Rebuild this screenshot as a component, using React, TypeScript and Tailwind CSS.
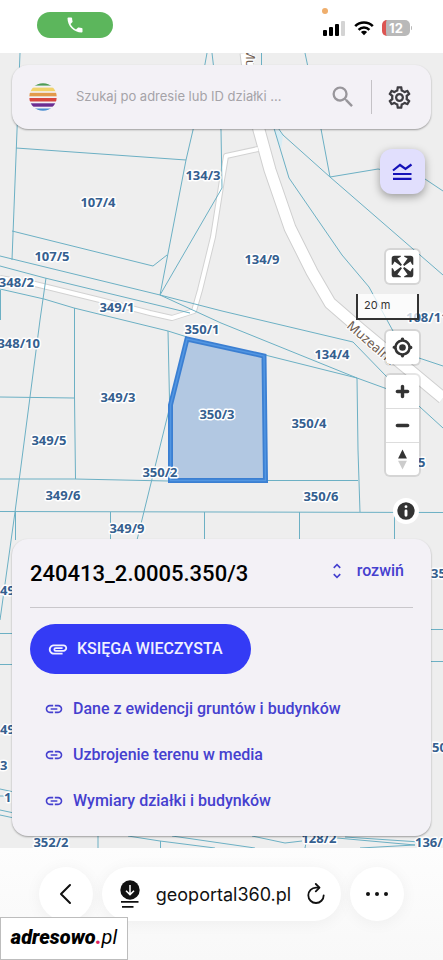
import { MdAttachment, MdLink, MdOutlineSettings, MdPhone, MdSearch, MdUnfoldMore } from 'react-icons/md';

interface ParcelLabel {
  text: string;
  x: number;
  y: number;
  anchor?: 'start' | 'middle' | 'end';
}

const parcelLabels: ParcelLabel[] = [
  { text: '107/4', x: 98, y: 207 },
  { text: '134/3', x: 203, y: 180 },
  { text: '107/5', x: 52, y: 261 },
  { text: '348/2', x: 34, y: 287, anchor: 'end' },
  { text: '349/1', x: 117, y: 312 },
  { text: '350/1', x: 202, y: 334 },
  { text: '134/9', x: 262, y: 264 },
  { text: '108/11', x: 406, y: 322, anchor: 'start' },
  { text: '348/10', x: 40, y: 348, anchor: 'end' },
  { text: '134/4', x: 332, y: 359 },
  { text: '349/3', x: 118, y: 402 },
  { text: '350/3', x: 217, y: 419 },
  { text: '350/4', x: 309, y: 428 },
  { text: '349/5', x: 49, y: 445 },
  { text: '350/2', x: 160, y: 477 },
  { text: '349/6', x: 63, y: 500 },
  { text: '350/6', x: 321, y: 501 },
  { text: '349/9', x: 127, y: 533 },
  { text: '5', x: 418, y: 467, anchor: 'start' },
  { text: '35', x: 431, y: 578, anchor: 'start' },
  { text: '49', x: 0, y: 595, anchor: 'start' },
  { text: '49', x: 0, y: 734, anchor: 'start' },
  { text: '50', x: 432, y: 752, anchor: 'start' },
  { text: '3', x: 0, y: 770, anchor: 'start' },
  { text: '1', x: 4, y: 802, anchor: 'start' },
  { text: '352/2', x: 51, y: 847 },
  { text: '128/2', x: 319, y: 843 },
  { text: '136/', x: 415, y: 847, anchor: 'start' },
];

const boundaries = [
  'M20 53L12 260',
  'M207 53L193 130L186 160L160 295',
  'M212 53L221 130L222 188L160 295',
  'M16 148L186 160',
  'M12 231L153 266L167 255',
  'M0 256L160 295L222 311L353 342L386 376L443 428',
  'M0 266L45 278L190 313',
  'M160 295L221 323L357 378L390 390',
  'M0 289L44 299L74 308L168 331L187 337',
  'M265 355L357 378L358 450L360 512',
  'M46 278L40 320L30 397L15 512L0 620',
  'M74.5 308V397L75.5 479',
  'M0 397L74 398',
  'M168 331L169.5 400',
  'M0 479H75L168 481M266 480.5H358',
  'M0 511.5L443 512.5',
  'M169 410L137 540',
  'M15.5 512V540M110.5 512V540M204.5 512V540M299.5 512V540M394.5 512V540',
  'M0.5 290V320',
  'M0 633.5H14M0 664.5H14M430 629.5H443M430 661.5H443',
  'M0 789L14 792M0 796H5M0 810L14 813M0 815L14 818',
  'M98 835V848M160.5 841V848M128 836L160 841L215 848M172 836L255 848',
  'M252 836L285 843L302 841M306 843L305 848M337 838L415 845M345 837L420 842M415 845L360 848',
  'M261.5 53V66',
  'M273 125L289 178L342 255L369 287L393 331L410 355L443 366',
  'M276 125L283 135L330 177L443 275',
  'M305 53L321 129L330 177L378 169L425 179L443 191',
];

const serviceRoad = 'M258 149L226 156L222 180L213 237L200 290L194 311L172 318L150 313L100 300L35 284L0 278';
const mainRoad = 'M246 53L252 100L259 130L270 170L290 228L312 272L330 303L360 329L443 398';
const selectedParcel = 'M187 339L264 356L265.5 480.5L170.5 480.5L170.5 405Z';

const links = ['Dane z ewidencji gruntów i budynków', 'Uzbrojenie terenu w media', 'Wymiary działki i budynków'];

function StatusBar() {
  return (
    <header className="relative h-[53px] flex items-start justify-between bg-white pt-3 pl-[37px] pr-[31px]">
      <div className="w-[76px] h-[26px] rounded-full bg-[#5cb65c] flex items-center justify-center">
        <MdPhone className="size-5 text-white" />
      </div>
      <span className="absolute top-2 left-[73%] size-1.5 -translate-x-px rounded-full bg-[#efae6c]" />
      <div className="flex items-center gap-2 pt-2">
        <svg width="23" height="16" viewBox="0 0 23 16">
          <rect x="0" y="10" width="4" height="6" rx="1" />
          <rect x="6" y="7" width="4" height="9" rx="1" />
          <rect x="12" y="4" width="4" height="12" rx="1" />
          <rect x="18" y="1" width="4" height="15" rx="1" fill="#d4d4d4" />
        </svg>
        <svg width="20" height="16" viewBox="0 0 20 16" fill="none" stroke="#000" strokeWidth="2.6">
          <path d="M1.2 6.2a12.4 12.4 0 0 1 17.6 0" />
          <path d="M4.6 9.8a7.6 7.6 0 0 1 10.8 0" />
          <path d="M10 15.2L6.9 12a4.4 4.4 0 0 1 6.2 0Z" fill="#000" stroke="none" />
        </svg>
        <div className="flex items-center">
          <div className="h-4 w-7 rounded-[5px] border-l-4 border-[#dc5552] bg-[#b9b9b9] pr-1 text-center text-[13px] leading-4 font-bold text-white">
            12
          </div>
          <span className="ml-px h-1 w-px rounded-r bg-[#b9b9b9]" />
        </div>
      </div>
    </header>
  );
}

function ParcelMap() {
  return (
    <svg
      className="absolute inset-0 w-full h-full"
      viewBox="0 53 443 795"
      preserveAspectRatio="xMidYMid slice"
      aria-hidden="true"
    >
      {/* Roads */}
      <g fill="none" strokeLinejoin="round">
        <path d={serviceRoad} stroke="#d2d2d2" strokeWidth="6" />
        <path d={mainRoad} stroke="#cfcfcf" strokeWidth="13" />
        <path d={serviceRoad} stroke="#fff" strokeWidth="4" />
        <path d={mainRoad} stroke="#fff" strokeWidth="11" />
      </g>

      {/* Parcel boundaries */}
      <path d="M274 129L276 128L283 135L281 150Z" fill="#d8edf5" />
      <path d={boundaries.join('')} fill="none" stroke="#6cb0c4" strokeWidth="1" />

      {/* Selected parcel */}
      <path d={selectedParcel} fill="#b2c8e2" stroke="#3b7fd2" strokeWidth="5" />
      <path d={selectedParcel} fill="none" stroke="#5296e2" strokeWidth="1.5" />

      <g fill="#6d5b4f" stroke="#fff" strokeWidth="2" paintOrder="stroke" fontSize="13" className="font-['Noto_Sans',sans-serif]">
        <text transform="translate(346 327) rotate(41)">Muzealna</text>
        <text transform="translate(246 48) rotate(90)">Mu</text>
      </g>

      <g
        fill="#35608f"
        stroke="#fff"
        strokeWidth="3"
        strokeLinejoin="round"
        paintOrder="stroke"
        fontSize="13"
        fontWeight="700"
        className="font-['Noto_Sans',sans-serif]"
      >
        {parcelLabels.map((label) => (
          <text key={`${label.text}-${label.y}`} x={label.x} y={label.y} textAnchor={label.anchor ?? 'middle'}>
            {label.text}
          </text>
        ))}
      </g>
    </svg>
  );
}

function Logo() {
  return (
    <svg className="size-7 shrink-0" viewBox="0 0 28 28">
      <clipPath id="logo-disc">
        <circle cx="14" cy="14" r="13.7" />
      </clipPath>
      <g clipPath="url(#logo-disc)">
        <rect y="0" width="28" height="2.6" fill="#4f9b55" />
        <rect y="4.6" width="28" height="3.6" fill="#f1d36b" />
        <rect y="9.8" width="28" height="3.5" fill="#e29a4b" />
        <rect y="15" width="28" height="3.5" fill="#d8473f" />
        <rect y="20.3" width="28" height="3.4" fill="#6b2d91" />
        <rect y="25.5" width="28" height="2.5" fill="#4d8fd0" />
      </g>
    </svg>
  );
}

function SearchBar() {
  return (
    <div className="h-16 flex items-center rounded-2xl bg-[#f3f1f6] pl-[17px] pr-[18px] shadow-[0_1px_2px_rgba(0,0,0,0.35)]">
      <Logo />
      <input
        type="text"
        aria-label="Szukaj"
        placeholder="Szukaj po adresie lub ID działki ..."
        className="ml-[19px] min-w-0 flex-1 bg-transparent text-[13px] text-[#333] placeholder:text-[#a5a3a8] outline-none"
      />
      <button aria-label="Szukaj działki" className="text-[#98969b]">
        <MdSearch className="size-7" />
      </button>
      <span className="mx-3.5 h-[34px] w-px bg-[#c4c2c6]" />
      <button aria-label="Ustawienia" className="text-[#3e3d42]">
        <MdOutlineSettings className="size-[27px]" />
      </button>
    </div>
  );
}

function MapControls() {
  return (
    <>
      <button
        aria-label="Pomiar"
        className="mt-5 mr-1.5 size-[45px] self-end rounded-xl bg-[#e1dffd] shadow-[0_3px_8px_rgba(0,0,0,0.35)]"
      >
        <svg viewBox="0 0 45 45" fill="none" stroke="#1512b8" strokeWidth="2.2">
          <path d="M13 21.5L20 16L25.5 20L31.5 15.5M13 25H31.5M13 29.8H31.5" />
        </svg>
      </button>

      <div className="mt-14 mr-3 mb-3 flex flex-col items-end gap-[11px]">
        <button aria-label="Pełny ekran" className="size-[33px] rounded bg-white shadow-[0_0_0_2px_rgba(0,0,0,0.1)]">
          <svg viewBox="0 0 29 29" fill="#333">
            <path d="M24 16v5.5c0 1.75-.75 2.5-2.5 2.5H16v-1l3-1.5-4-5.5 1-1 5.5 4 1.5-3h1zM6 16l1.5 3 5.5-4 1 1-4 5.5 3 1.5v1H7.5C5.75 24 5 23.25 5 21.5V16h1zm7-11v1l-3 1.5 4 5.5-1 1-5.5-4L6 13H5V7.5C5 5.75 5.75 5 7.5 5H13zm11 2.5c0-1.75-.75-2.5-2.5-2.5H16v1l3 1.5-4 5.5 1 1 5.5-4 1.5 3h1V7.5z" />
          </svg>
        </button>

        <div className="h-[26px] w-[63px] border-2 border-t-0 border-[#333] bg-white/75 pl-1.5 text-[11px] leading-[22px] text-[#333]">
          20 m
        </div>

        <button aria-label="Moja lokalizacja" className="size-[33px] rounded bg-white shadow-[0_0_0_2px_rgba(0,0,0,0.1)]">
          <svg viewBox="0 0 20 20" fill="#333">
            <path d="M10 4C9 4 9 5 9 5v.1A5 5 0 0 0 5.1 9H5s-1 0-1 1 1 1 1 1h.1A5 5 0 0 0 9 14.9v.1s0 1 1 1 1-1 1-1v-.1a5 5 0 0 0 3.9-3.9h.1s1 0 1-1-1-1-1-1h-.1A5 5 0 0 0 11 5.1V5s0-1-1-1zm0 2.5a3.5 3.5 0 1 1 0 7 3.5 3.5 0 1 1 0-7z" />
            <circle cx="10" cy="10" r="2" />
          </svg>
        </button>

        <div className="flex flex-col divide-y divide-[#ddd] rounded bg-white shadow-[0_0_0_2px_rgba(0,0,0,0.1)]">
          <button aria-label="Przybliż" className="w-[33px]">
            <svg viewBox="0 0 29 29" fill="#333">
              <path d="M14.5 8.5c-.75 0-1.5.75-1.5 1.5v3h-3c-.75 0-1.5.75-1.5 1.5S9.25 16 10 16h3v3c0 .75.75 1.5 1.5 1.5S16 19.75 16 19v-3h3c.75 0 1.5-.75 1.5-1.5S19.75 13 19 13h-3v-3c0-.75-.75-1.5-1.5-1.5z" />
            </svg>
          </button>
          <button aria-label="Oddal" className="w-[33px]">
            <svg viewBox="0 0 29 29" fill="#333">
              <path d="M10 13c-.75 0-1.5.75-1.5 1.5S9.25 16 10 16h9c.75 0 1.5-.75 1.5-1.5S19.75 13 19 13h-9z" />
            </svg>
          </button>
          <button aria-label="Północ" className="w-[33px]">
            <svg className="h-8 w-full" viewBox="0 0 29 29">
              <path d="M10.5 14l4-8 4 8z" fill="#333" />
              <path d="M10.5 16l4 8 4-8z" fill="#ccc" />
            </svg>
          </button>
        </div>

        <button aria-label="Informacje o mapie" className="mt-3 size-[26px] rounded-full bg-white">
          <svg viewBox="1 1 18 18" fill="#333" fillRule="evenodd">
            <path d="M4 10a6 6 0 1 0 12 0 6 6 0 1 0-12 0m5-3a1 1 0 1 0 2 0 1 1 0 1 0-2 0m0 3a1 1 0 1 1 2 0v3a1 1 0 1 1-2 0" />
          </svg>
        </button>
      </div>
    </>
  );
}

function ParcelSheet() {
  return (
    <section className="mt-auto rounded-2xl bg-[#f3f1f6] px-[18px] pt-4 pb-3 font-['Roboto',sans-serif] shadow-[0_1px_2px_rgba(0,0,0,0.35)]">
      <div className="h-9 flex items-center justify-between">
        <h1 className="text-[22px] font-medium text-black">240413_2.0005.350/3</h1>
        <button className="flex items-center gap-2.5 pr-[9px] pb-1 text-[16px] font-medium text-[#4540cf]">
          <MdUnfoldMore className="size-5" />
          rozwiń
        </button>
      </div>
      <hr className="mt-4 border-[#c9c7cb]" />

      <button className="mt-4 h-[50px] flex items-center gap-2 rounded-full bg-[#343bf5] pl-[17px] pr-7 text-[16px] font-medium text-[#f0f0ff]">
        <MdAttachment className="size-[22px]" />
        KSIĘGA WIECZYSTA
      </button>

      <div className="mt-3 flex flex-col items-start">
        {links.map((link) => (
          <a key={link} href="#" className="h-[46px] flex items-center gap-[9px] pl-3.5 text-[16px] font-medium text-[#4540cf]">
            <MdLink className="size-5" />
            {link}
          </a>
        ))}
      </div>
    </section>
  );
}

function BrowserBar() {
  return (
    <footer className="relative h-28 flex items-start justify-center gap-[9px] bg-linear-to-b from-[#fdfdfd] to-[#f8f8f8] px-3 pt-[19px]">
      <button aria-label="Wstecz" className="size-[54px] shrink-0 flex items-center justify-center rounded-full bg-white shadow-[0_2px_16px_rgba(0,0,0,0.05)]">
        <svg width="14" height="22" viewBox="0 0 14 22" fill="none" stroke="#111" strokeWidth="2" strokeLinecap="round" strokeLinejoin="round">
          <path d="M11 2L2 11L11 20" />
        </svg>
      </button>

      <div className="h-[54px] w-[239px] flex items-center rounded-full bg-white pl-[18px] pr-4 shadow-[0_2px_16px_rgba(0,0,0,0.05)]">
        <svg width="20" height="29" viewBox="0 0 20 29" fill="none" stroke="#111" strokeWidth="1.8">
          <circle cx="10" cy="10" r="9.7" fill="#111" stroke="none" />
          <path d="M10 5V14.5M6 10.8L10 14.6L14 10.8" stroke="#fff" strokeWidth="1.5" />
          <path d="M1 21.8H18.5M2 26.8H13.5" />
        </svg>
        <span className="flex-1 text-center text-[18px] text-[#111]">geoportal360.pl</span>
        <button aria-label="Odśwież">
          <svg width="18" height="22" viewBox="0 0 18 22" fill="none" stroke="#111" strokeWidth="1.8" strokeLinecap="round" strokeLinejoin="round">
            <path d="M12 4.6H9A7.7 7.7 0 1 0 16.7 12.3" />
            <path d="M8.8 1L12.5 4.6L8.8 8.4" />
          </svg>
        </button>
      </div>

      <button aria-label="Więcej" className="size-[54px] shrink-0 flex items-center justify-center gap-[5px] rounded-full bg-white shadow-[0_2px_16px_rgba(0,0,0,0.05)]">
        <span className="size-1 rounded-full bg-[#111]" />
        <span className="size-1 rounded-full bg-[#111]" />
        <span className="size-1 rounded-full bg-[#111]" />
      </button>

      {/* Watermark */}
      <div className="absolute bottom-0 left-0 h-[43px] w-32 border border-[#bdbdbd] bg-white text-center font-['Roboto',sans-serif] text-[20px] leading-[38px] italic text-black">
        <span className="font-black">adresowo</span>
        <span className="font-black text-[#e0245e]">.</span>
        <span>pl</span>
      </div>
    </footer>
  );
}

export default function App() {
  return (
    <div className="min-h-screen flex flex-col bg-white font-['Inter',sans-serif]">
      <StatusBar />
      <main className="relative flex-1 flex flex-col overflow-hidden bg-[#eeeeee]">
        <ParcelMap />
        <div className="relative flex-1 flex flex-col p-3">
          <SearchBar />
          <MapControls />
          <ParcelSheet />
        </div>
      </main>
      <BrowserBar />
    </div>
  );
}
